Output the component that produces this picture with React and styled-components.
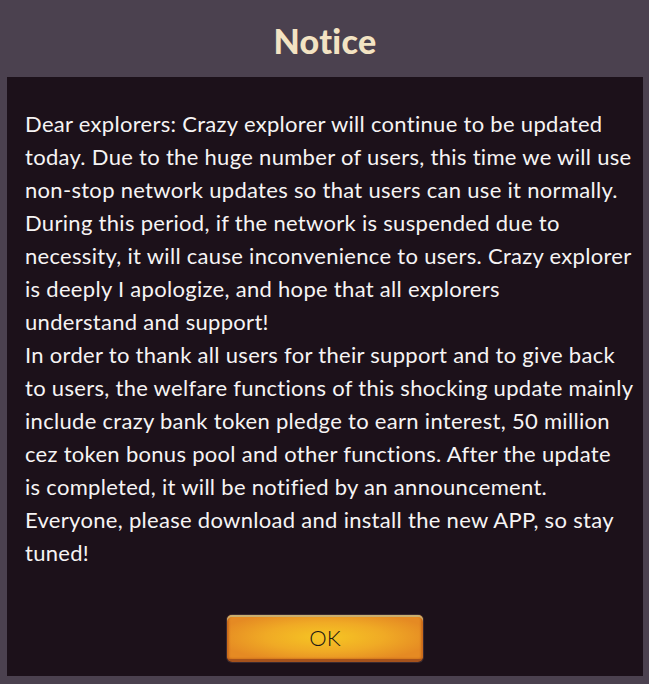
import React from "react";
import styled, { createGlobalStyle } from "styled-components";

const Global = createGlobalStyle`
  html, body { margin: 0; padding: 0; background: #4b414f; }
  body { font-family: "Lato", "Noto Sans", sans-serif; }
`;

const Page = styled.div`
  width: 649px;
  height: 684px;
  background: #4b414f;
  display: flex;
  flex-direction: column;
  box-sizing: border-box;
  padding: 0 6px 8px 7px;
`;

const Title = styled.h1`
  margin: 0;
  height: 77px;
  display: flex;
  align-items: center;
  justify-content: center;
  padding-top: 4px;
  box-sizing: border-box;
  font-family: "Lato", sans-serif;
  font-weight: 900;
  font-size: 34px;
  letter-spacing: 0.3px;
  color: #f3e3c3;
`;

const Panel = styled.div`
  flex: 1;
  background: #1c111a;
  display: flex;
  flex-direction: column;
  align-items: center;
  padding: 30px 0 0 18px;
  box-sizing: border-box;
`;

const Body = styled.div`
  align-self: stretch;
  color: #f6f4f4;
  font-size: 22px;
  line-height: 33px;
  letter-spacing: 0.3px;
`;

const Line = styled.div`
  white-space: nowrap;
`;

const OkButton = styled.button`
  margin-top: 46px;
  margin-right: 18px;
  width: 196px;
  height: 47px;
  border-radius: 5px;
  border: none;
  border-bottom: 3px solid #a5521c;
  box-shadow: 0 0 0 1px #3a2a30, inset 0 2px 0 #c9b070, inset 2px 0 2px #c96a1c, inset -2px 0 2px #c96a1c;
  background: radial-gradient(ellipse 55% 60% at 50% 50%, #f6c623 0%, #f0aa25 55%, #e58a23 100%);
  font-family: "Lato", sans-serif;
  font-weight: 300;
  font-size: 22px;
  color: #1e1a14;
  cursor: pointer;
`;

const lines = [
  "Dear explorers: Crazy explorer will continue to be updated",
  "today. Due to the huge number of users, this time we will use",
  "non-stop network updates so that users can use it normally.",
  "During this period, if the network is suspended due to",
  "necessity, it will cause inconvenience to users. Crazy explorer",
  "is deeply I apologize, and hope that all explorers",
  "understand and support!",
  "In order to thank all users for their support and to give back",
  "to users, the welfare functions of this shocking update mainly",
  "include crazy bank token pledge to earn interest, 50 million",
  "cez token bonus pool and other functions. After the update",
  "is completed, it will be notified by an announcement.",
  "Everyone, please download and install the new APP, so stay",
  "tuned!",
];

export default function App() {
  return (
    <>
      <Global />
      <Page>
        <Title>Notice</Title>
        <Panel>
          <Body>
            {lines.map((l, i) => (
              <Line key={i}>{l}</Line>
            ))}
          </Body>
          <OkButton>OK</OkButton>
        </Panel>
      </Page>
    </>
  );
}
